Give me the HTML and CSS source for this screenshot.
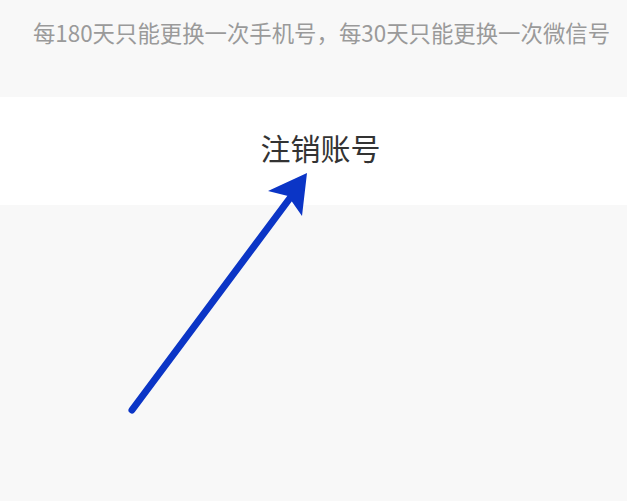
FILE: index.html
```html
<!DOCTYPE html>
<html lang="zh">
<head>
<meta charset="utf-8">
<link rel="stylesheet" href="styles.css">
</head>
<body>
<div class="page">
  <div class="notice">每180天只能更换一次手机号，每30天只能更换一次微信号</div>
  <div class="action">注销账号</div>
  <div class="rest"></div>
  <svg class="arrow" width="627" height="501" viewBox="0 0 627 501">
    <line x1="132" y1="410" x2="296" y2="190" stroke="#0b35c6" stroke-width="7" stroke-linecap="round"/>
    <polygon points="307,173 268,191 288,196 302,216" fill="#0b35c6"/>
  </svg>
</div>
</body>
</html>
```
FILE: styles.css
```css
html, body {
  margin: 0;
  padding: 0;
  background: #f8f8f8;
}
.page {
  position: relative;
  width: 627px;
  height: 501px;
  overflow: hidden;
  display: flex;
  flex-direction: column;
  font-family: "Noto Sans CJK SC", "Noto Sans", sans-serif;
  background: #f8f8f8;
}
.notice {
  height: 97px;
  box-sizing: border-box;
  padding: 16px 0 0 16px;
  text-align: center;
  font-size: 22.4px;
  line-height: 32px;
  color: #9a9a9a;
  white-space: nowrap;
}
.action {
  height: 108px;
  background: #ffffff;
  display: flex;
  align-items: center;
  justify-content: center;
  font-size: 30px;
  color: #333333;
  padding: 0 0 8px 14px;
  box-sizing: border-box;
}
.rest {
  flex: 1;
}
.arrow {
  position: absolute;
  left: 0;
  top: 0;
}
```
